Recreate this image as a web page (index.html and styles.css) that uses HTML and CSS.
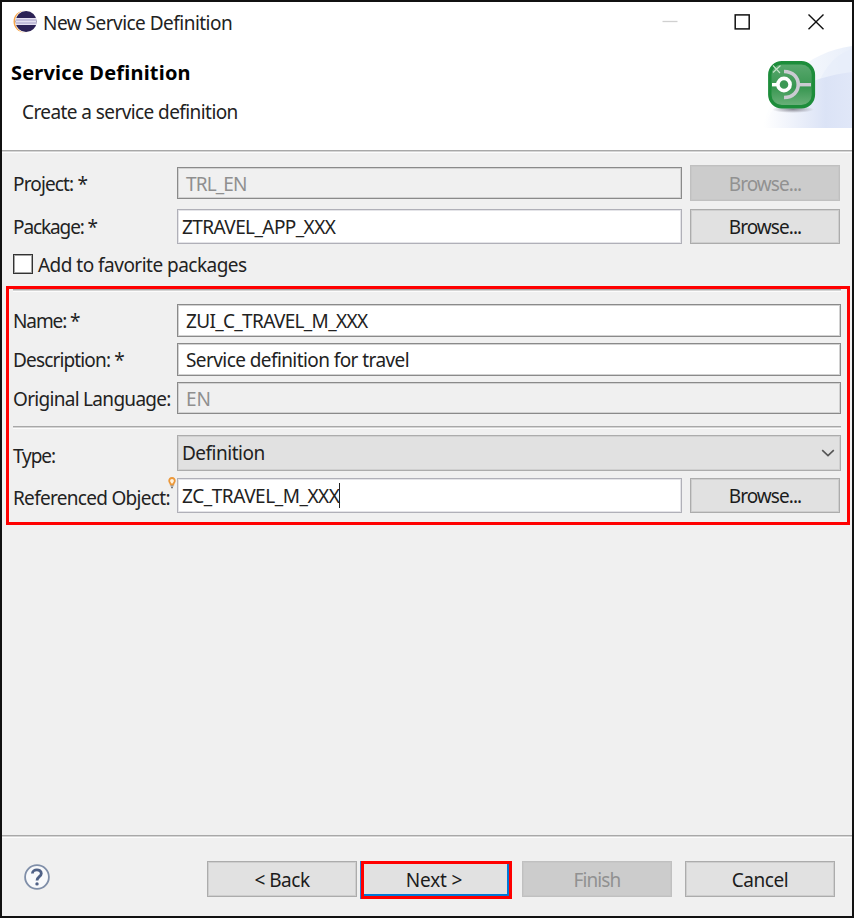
FILE: index.html
```
<!DOCTYPE html>
<html lang="en">
<head>
<meta charset="utf-8">
<title>New Service Definition</title>
<link rel="stylesheet" href="styles.css">
</head>
<body>
<div class="window">
  <header class="titlebar">
    <svg class="logo" viewBox="0 0 24 24" width="24" height="24">
      <circle cx="11.3" cy="11.5" r="10.8" fill="#f7a64a"/>
      <circle cx="13.3" cy="11.5" r="11.2" fill="#fff"/>
      <circle cx="13.1" cy="11.5" r="10.5" fill="#2c2255"/>
      <path d="M2.8 8H23.4V15H2.8Z" fill="#e4e0f0"/>
      <path d="M2.8 10H23.4M2.8 13H23.4" stroke="#9c95c0" stroke-width=".9"/>
    </svg>
    <span class="window-title">New Service Definition</span>
    <svg class="controls" viewBox="0 0 180 24" width="180" height="24">
      <path d="M0.5 9.5H15.5" stroke="#d0d0d0" stroke-width="1.3"/>
      <rect x="73.2" y="2.9" width="14" height="14" fill="none" stroke="#111" stroke-width="1.5"/>
      <path d="M146.5 2.4L161.5 17.2M161.5 2.4L146.5 17.2" stroke="#111" stroke-width="1.4"/>
    </svg>
  </header>
  <section class="banner">
    <div class="banner-text">
      <h1>Service Definition</h1>
      <p>Create a service definition</p>
    </div>
    <svg class="banner-art" viewBox="0 0 92 84" width="92" height="84">
      <defs>
        <linearGradient id="sky" x1="0" x2="1"><stop offset="0" stop-color="#fff"/><stop offset=".7" stop-color="#dbe3f6"/><stop offset="1" stop-color="#e0e7f8"/></linearGradient>
        <linearGradient id="pale" x1="0" x2="1"><stop offset="0" stop-color="#fff"/><stop offset="1" stop-color="#e9effa"/></linearGradient>
        <linearGradient id="green" x1="0" y1="0" x2="0" y2="1"><stop offset="0" stop-color="#5ca970"/><stop offset=".5" stop-color="#3c9854"/><stop offset=".55" stop-color="#379650"/><stop offset="1" stop-color="#6db27c"/></linearGradient>
        <radialGradient id="shade"><stop offset="0" stop-color="#8d8d98"/><stop offset="1" stop-color="#8d8d98" stop-opacity="0"/></radialGradient>
      </defs>
      <path d="M2 84C14 40 47 8 92 2V84Z" fill="url(#pale)"/>
      <path d="M50 84C52 42 66 13 92 5V84Z" fill="#e6edfa" opacity=".6"/>
      <path d="M4 84C14 52 45 34 92 28V84Z" fill="url(#sky)"/>
      <ellipse cx="33" cy="65.5" rx="21" ry="3.5" fill="url(#shade)"/>
      <rect x="9.8" y="18.8" width="43.6" height="44" rx="12" fill="url(#green)" stroke="#1d8d3b" stroke-width="3.4"/>
      <path d="M13 21.5L20 29M20.5 21.5L13 28.5" stroke="#c5e3ca" stroke-width="1.1"/>
      <path d="M24 27.5C43 27.5 43 53.5 24 53.5" fill="none" stroke="#cbcbd2" stroke-width="3.6"/>
      <path d="M38.5 40.7H51" stroke="#cbcbd2" stroke-width="3.4"/>
      <path d="M12 40.7H18" stroke="#fff" stroke-width="3.4"/>
      <circle cx="24" cy="40.5" r="6.1" fill="#3b9854" stroke="#fff" stroke-width="3.6"/>
    </svg>
  </section>
  <main class="form">
    <div class="row row-project">
      <label class="snug">Project: *</label>
      <div class="field disabled inset snug">TRL_EN</div>
      <button class="btn off browse">Browse...</button>
    </div>
    <div class="row row-package">
      <label class="snugger">Package: *</label>
      <div class="field soft">ZTRAVEL_APP_XXX</div>
      <button class="btn browse">Browse...</button>
    </div>
    <div class="check-row"><span class="checkbox"></span><span class="check-label">Add to favorite packages</span></div>
    <div class="highlight">
      <div class="rule"></div>
      <div class="row row-name">
        <label class="snugger">Name: *</label>
        <div class="field wide inset caps">ZUI_C_TRAVEL_M_XXX</div>
      </div>
      <div class="row row-desc">
        <label class="snug">Description: *</label>
        <div class="field wide inset">Service definition for travel</div>
      </div>
      <div class="row row-lang">
        <label class="tight">Original Language:</label>
        <div class="field wide disabled inset loose">EN</div>
      </div>
      <div class="rule rule-mid"></div>
      <div class="row row-type">
        <label class="low snugger">Type:</label>
        <div class="field wide combo"><span>Definition</span>
          <svg viewBox="0 0 14 8" width="14" height="8"><path d="M1.2 1.2L7 6.6L12.8 1.2" fill="none" stroke="#555" stroke-width="1.6"/></svg>
        </div>
      </div>
      <div class="row row-ref">
        <label class="low tight">Referenced Object:</label>
        <svg class="bulb" viewBox="0 0 8 12" width="8" height="12"><path d="M4 1C2 1 1.2 2.4 1.2 3.8C1.2 5.4 2.5 6 2.7 7.5H5.3C5.5 6 6.8 5.4 6.8 3.8C6.8 2.4 6 1 4 1Z" fill="#fff3df" stroke="#eb983b" stroke-width="1.8"/><path d="M2.6 9H5.4M3 10.6H5" stroke="#777" stroke-width="1.2"/></svg>
        <div class="field soft ref">ZC_TRAVEL_M_XXX<i class="caret"></i></div>
        <button class="btn browse">Browse...</button>
      </div>
    </div>
  </main>
  <footer class="footer">
    <svg class="help" viewBox="0 0 28 28" width="28" height="28">
      <circle cx="14" cy="14" r="11.9" fill="#f8f9fb" stroke="#7f8ea8" stroke-width="1.8"/>
      <path d="M9.4 10.6C9.4 5.6 18.3 5.7 18.3 10.4C18.3 13.7 14 13.6 14 17.6" fill="none" stroke="#4f6186" stroke-width="2.8"/>
      <circle cx="14" cy="20.9" r="1.7" fill="#4f6186"/>
    </svg>
    <button class="btn back">&lt; Back</button>
    <div class="next-wrap"><button class="btn next">Next &gt;</button></div>
    <button class="btn off finish">Finish</button>
    <button class="btn cancel">Cancel</button>
  </footer>
</div>
</body>
</html>
```
FILE: styles.css
```
* { box-sizing: border-box; }
body {
  margin: 0;
  font: 19px/26px "Noto Sans", "Open Sans", sans-serif;
  letter-spacing: -0.58px;
  color: #222;
}
.window {
  width: 854px;
  height: 918px;
  border: 2px solid #111;
  background: #f0f0f0;
  display: flex;
  flex-direction: column;
}
.titlebar {
  height: 42px;
  flex: none;
  padding: 7px 10px 0 11px;
  background: #fff;
  display: flex;
}
.logo { margin-top: 1px; }
.window-title { margin: 1px 0 0 6px; letter-spacing: -0.52px; }
.controls { margin: 3px 0 0 auto; }
.banner {
  height: 106px;
  flex: none;
  background: #fff;
  display: flex;
  justify-content: space-between;
}
h1 {
  margin: 16px 0 0 9px;
  font-size: 20px;
  line-height: 26px;
  font-weight: 700;
  letter-spacing: 0.2px;
  color: #000;
}
.banner p { margin: 13px 0 0 20px; }
.form {
  flex: 1;
  border-top: 1px solid #a8a8a8;
  box-shadow: inset 0 1px #d4d4d4, inset 0 2px #fcfcfc;
  padding: 14px 2px 0 4px;
}
.row { display: flex; padding-left: 7px; }
.row label {
  width: 164px;
  flex: none;
  align-self: center;
  white-space: nowrap;
}
.row .snug { letter-spacing: -0.85px; }
.row .snugger { letter-spacing: -1.1px; }
.row .tight { letter-spacing: -0.7px; }
.row .caps { letter-spacing: -0.66px; }
.row .loose { letter-spacing: 0; }
.row .low { padding-top: 5px; }
.field {
  width: 505px;
  padding-left: 4px;
  border: 1px solid #8a8a8a;
  box-shadow: inset 0 0 0 1px #d2d2d2;
  background: #fff;
  display: flex;
  align-items: center;
  white-space: nowrap;
}
.wide { width: 664px; }
.field.inset { padding-left: 8px; }
.soft { border-color: #b0b0b8; box-shadow: inset 0 0 0 1px #e4e4e8; }
.disabled { background: #f0f0f0; color: #8f8f8f; }
.btn {
  margin: 0;
  padding: 0;
  border: 1px solid #acacac;
  box-shadow: inset 0 0 0 1px #cecece;
  background: #e1e1e1;
  color: #1c1c1c;
  font: inherit;
  letter-spacing: -0.5px;
}
.off { background: #ccc; border-color: #c0c0c0; box-shadow: inset 0 0 0 1px #c7c7c7; color: #919191; }
.browse { width: 150px; margin-left: 8px; letter-spacing: -0.95px; }
.row-project { height: 36px; }
.row-project .field { margin: 2px 0; }
.row-project .field, .row-project .btn { padding-top: 1px; }
.row-package { height: 35px; margin-top: 8px; }
.row-project label, .row-package label { padding-top: 1px; }
.row-lang label, .row-lang .field { padding-top: 1px; }
.check-row {
  height: 20px;
  margin-top: 10px;
  padding-left: 7px;
  display: flex;
  align-items: center;
  gap: 5px;
  letter-spacing: -0.52px;
}
.check-label { padding-top: 1px; }
.checkbox {
  width: 20px;
  height: 20px;
  border: 1px solid #333;
  box-shadow: inset 0 0 0 1px #a4a4a4;
  background: #fff;
}
.highlight {
  width: 844px;
  height: 239px;
  margin-top: 12px;
  border: 3px solid #f00;
}
.highlight .row { padding-left: 4px; }
.rule {
  height: 3px;
  margin: 0 6px 0 4px;
  border-top: 1px solid #a8a8a8;
  border-bottom: 1px solid #fcfcfc;
  background: #d4d4d4;
}
.row-name { height: 33px; margin-top: 12px; }
.row-desc { height: 33px; margin-top: 6px; }
.row-lang { height: 32px; margin-top: 6px; }
.rule-mid { margin-top: 12px; }
.row-type { height: 36px; margin-top: 6px; }
.combo {
  justify-content: space-between;
  padding-right: 5px;
  border-color: #acacac;
  box-shadow: inset 0 0 0 1px #d0d0d0;
  background: #e1e1e1;
  letter-spacing: -0.5px;
}
.row-ref { height: 35px; margin-top: 7px; position: relative; }
.bulb { position: absolute; left: 159px; top: -1px; }
.ref { letter-spacing: -0.46px; }
.caret { width: 1px; height: 25px; background: #222; }
.footer {
  height: 81px;
  flex: none;
  border-top: 1px solid #a8a8a8;
  box-shadow: inset 0 1px #d4d4d4, inset 0 2px #fcfcfc;
  padding: 25px 17px 0 20px;
  display: flex;
  align-items: flex-start;
}
.help { margin: 2px 156px 0 1px; }
.footer .btn { width: 150px; height: 36px; padding-top: 1px; }
.next-wrap {
  width: 151px;
  height: 38px;
  margin: 0 10px 0 4px;
  border: 3px solid #f00;
  box-shadow: -1px 0 #2a7fd4;
}
.footer .next {
  width: 145px;
  height: 32px;
  display: block;
  padding: 1px 3px 0 0;
  border-width: 0 2px 2px 0;
  border-color: #0078d7;
  box-shadow: none;
  letter-spacing: -0.13px;
}
.finish { letter-spacing: -0.9px; }
.cancel { margin-left: 13px; letter-spacing: -0.45px; }
```
